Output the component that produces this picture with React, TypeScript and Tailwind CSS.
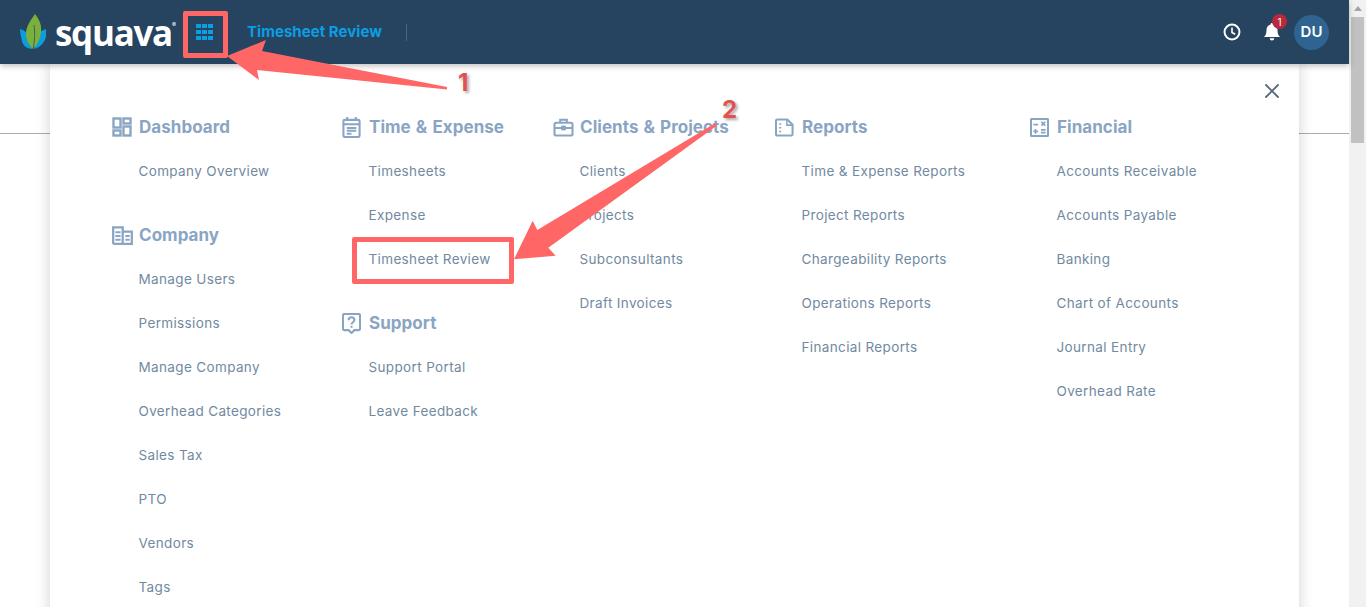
import { X } from 'lucide-react';

type IconProps = { className?: string };

const DashboardIcon = ({ className }: IconProps) => (
    <svg viewBox="0 0 20 20" className={className} fill="none" stroke="currentColor" strokeWidth="2.400">
        <rect x="1.500" y="1.500" width="7" height="9" />
        <rect x="11.500" y="1.500" width="7" height="5" />
        <rect x="1.500" y="13.500" width="7" height="5" />
        <rect x="11.500" y="9.500" width="7" height="9" />
    </svg>
);

const CompanyIcon = ({ className }: IconProps) => (
    <svg viewBox="0 0 22 20" className={className} fill="none" stroke="currentColor" strokeWidth="2.400">
        <path d="M1.200 19V1.500h10V19M11.200 6h9.600v12.800H1.200" />
        <path d="M3.500 6.500h5.500M3.500 10.500h5.500M3.500 14.500h5.500M14 10.500h4.500M14 14.500h4.500" strokeWidth="2" />
    </svg>
);

const TimeIcon = ({ className }: IconProps) => (
    <svg viewBox="0 0 20 22" className={className} fill="none" stroke="currentColor" strokeWidth="2.200">
        <rect x="1.500" y="3" width="17" height="18" rx="1.500" />
        <path d="M5.500 0v4M14.500 0v4M1.500 7.500h17M5 11.500h10M5 14.500h10M5 17.500h5" />
    </svg>
);

const BriefcaseIcon = ({ className }: IconProps) => (
    <svg viewBox="0 0 22 20" className={className} fill="none" stroke="currentColor" strokeWidth="2.200">
        <rect x="1.500" y="5" width="19" height="13.500" rx="2" />
        <path d="M7.500 5V1.800h7V5M1.500 10.500h19" />
        <rect x="8.500" y="8" width="5" height="5" fill="currentColor" stroke="none" />
    </svg>
);

const SupportIcon = ({ className }: IconProps) => (
    <svg viewBox="0 0 20 22" className={className} fill="none" stroke="currentColor" strokeWidth="2.200">
        <path d="M2.500 1h15a1.500 1.500 0 0 1 1.500 1.500v14a1.500 1.500 0 0 1-1.500 1.500H13l-3 3-3-3H2.500A1.500 1.500 0 0 1 1 16.500v-14A1.500 1.500 0 0 1 2.500 1z" />
        <path d="M7 7.500C7 5.500 8.300 4.500 10 4.500s3 1 3 2.800c0 2.400-3 2.400-3 4.700" />
        <path d="M10 13.500v2" />
    </svg>
);

const ReportsIcon = ({ className }: IconProps) => (
    <svg viewBox="0 0 20 20" className={className} fill="none" stroke="currentColor" strokeWidth="2.200">
        <path d="M2.500 1.500H13l5.500 5.500v10a1.500 1.500 0 0 1-1.500 1.500H2.500A1.500 1.500 0 0 1 1 17V3a1.500 1.500 0 0 1 1.500-1.500z" />
        <path d="M12.500 1.500V7.500h6" strokeWidth="1.600" />
        <path d="M5.500 5.500v1.500M5.500 9.500V11M5.500 13.500V15" />
    </svg>
);

const FinancialIcon = ({ className }: IconProps) => (
    <svg viewBox="0 0 20 20" className={className} fill="none" stroke="currentColor" strokeWidth="2.200">
        <rect x="1" y="1" width="18" height="18" rx="1" />
        <path d="M3.500 7h5M5.800 11.500v5M3.500 14h5M11.500 12.500h5M11.500 15.500h5" strokeWidth="1.800" />
        <path d="M12 4l4 4M16 4l-4 4" strokeWidth="1.800" />
    </svg>
);

const columns = [
    {
        width: 'w-[230px]',
        groups: [
            { icon: DashboardIcon, size: 'w-[20px] h-[20px]', title: 'Dashboard', items: ['Company Overview'] },
            {
                icon: CompanyIcon,
                size: 'w-[21px] h-[19px]',
                title: 'Company',
                items: ['Manage Users', 'Permissions', 'Manage Company', 'Overhead Categories', 'Sales Tax', 'PTO', 'Vendors', 'Tags'],
            },
        ],
    },
    {
        width: 'w-[211px]',
        groups: [
            { icon: TimeIcon, size: 'w-[19px] h-[21px]', title: 'Time & Expense', items: ['Timesheets', 'Expense', 'Timesheet Review'] },
            { icon: SupportIcon, size: 'w-[19px] h-[21px]', title: 'Support', items: ['Support Portal', 'Leave Feedback'] },
        ],
    },
    {
        width: 'w-[222px]',
        groups: [
            {
                icon: BriefcaseIcon,
                size: 'w-[21px] h-[19px]',
                title: 'Clients & Projects',
                items: ['Clients', 'Projects', 'Subconsultants', 'Draft Invoices'],
            },
        ],
    },
    {
        width: 'w-[255px]',
        groups: [
            {
                icon: ReportsIcon,
                size: 'w-[19px] h-[19px]',
                title: 'Reports',
                items: ['Time & Expense Reports', 'Project Reports', 'Chargeability Reports', 'Operations Reports', 'Financial Reports'],
            },
        ],
    },
    {
        width: 'w-[220px]',
        groups: [
            {
                icon: FinancialIcon,
                size: 'w-[19px] h-[19px]',
                title: 'Financial',
                items: ['Accounts Receivable', 'Accounts Payable', 'Banking', 'Chart of Accounts', 'Journal Entry', 'Overhead Rate'],
            },
        ],
    },
];

function Logo() {
    return (
        <div className="flex w-[151px] shrink-0 items-center">
            <svg viewBox="0 0 26 36" className="h-[36px] w-[26px] shrink-0">
                <path d="M0 15c4 1 7 3 8 8 1 4 2 8 5 12-6 0-10-3-11-8-1-4-2-8-2-12z" fill="#0d9ddb" />
                <path d="M26 15c1 5 0 10-3 14-2 3-5 5-9 6 2-3 1-7 2-11 1-5 5-7 10-9z" fill="#0d9ddb" />
                <path d="M15 0c4 5 7 11 6 18-1 7-3 12-8 17-4-4-7-9-7-15C6 12 11 6 15 0z" fill="#7ab13c" />
                <path d="M14 11c1 8 1 15-1 24" stroke="#26435f" strokeWidth="0.700" fill="none" />
            </svg>
            <span className="ml-[9px] font-['Open_Sans',sans-serif] text-[35px] leading-none font-bold tracking-[-1.300px] text-white">squava</span>
            <span className="mt-[-14px] text-[6px] leading-none text-white">®</span>
        </div>
    );
}

function Scrollbar() {
    return (
        <div className="flex w-[17px] shrink-0 flex-col items-center bg-[#f1f1f1]">
            <div className="flex h-[17px] w-full items-center justify-center">
                <div className="h-0 w-0 border-x-[4px] border-b-[5px] border-x-transparent border-b-[#a3a3a3]" />
            </div>
            <div className="h-[126px] w-[13px] bg-[#c1c1c1]" />
        </div>
    );
}

export default function App() {
    return (
        <div className="relative flex h-[607px] w-full overflow-hidden bg-white font-['Inter',sans-serif]">
            <div className="flex min-w-0 flex-1 flex-col">
                <header className="relative z-20 flex h-16 shrink-0 items-center bg-[#26435f] pl-[20px] pr-[20px] shadow-[0_2px_6px_rgba(0,0,0,0.25)]">
                    <Logo />
                    <div className="ml-[25px] grid h-[16px] w-[17px] grid-cols-3 grid-rows-3 gap-[1.500px]">
                        {Array.from({ length: 9 }).map((_, i) => (
                            <div key={i} className="bg-[#0b9ee3]" />
                        ))}
                    </div>
                    <span className="ml-[34px] w-[134px] pt-[1px] text-[15px] font-bold tracking-[0.05px] whitespace-nowrap text-[#0b9ee3]">Timesheet Review</span>
                    <div className="ml-[25px] h-[17px] w-px bg-[#3f6a8f]" />
                    <div className="ml-auto flex items-center">
                        <svg viewBox="0 0 20 20" className="h-[18px] w-[18px]" fill="none" stroke="white" strokeWidth="2.200">
                            <circle cx="10" cy="10" r="8.300" />
                            <path d="M10 5v5.500l3.500 2" strokeWidth="1.800" />
                        </svg>
                        <div className="relative ml-[23px] mr-[14px]">
                            <svg viewBox="0 0 16 18" className="h-[18px] w-[16px]" fill="white">
                                <path d="M8 0a1.400 1.400 0 0 1 1.400 1.500C12 2.200 13.500 4.300 13.500 7c0 4 1 5.500 2.500 7H0c1.500-1.500 2.500-3 2.500-7 0-2.700 1.500-4.800 4.100-5.500A1.400 1.400 0 0 1 8 0z" />
                                <path d="M5.800 15.200h4.400A2.200 2.200 0 0 1 8 17.500a2.200 2.200 0 0 1-2.200-2.300z" />
                            </svg>
                            <span className="absolute -right-[7px] -top-[9px] flex h-[15px] w-[15px] items-center justify-center rounded-full bg-[#b8293d] text-[10px] leading-none text-white">1</span>
                        </div>
                        <div className="flex h-[35px] w-[35px] items-center justify-center rounded-full bg-[#2f6390] text-[15px] font-semibold text-white">DU</div>
                    </div>
                </header>
                <div className="mt-[69px] border-t border-[#ababab]" />
            </div>
            <Scrollbar />

            {/* menu panel */}
            <div className="absolute left-[50px] top-[64px] z-10 h-[560px] w-[1249px] bg-white pl-[62px] pt-[41px] shadow-[0_0_14px_rgba(0,0,0,0.18)]">
                <X className="absolute right-[15px] top-[15px] h-[24px] w-[24px] text-[#5d6b78]" strokeWidth={1.900} />
                <div className="flex">
                    {columns.map((col) => (
                        <div key={col.groups[0].title} className={`${col.width} flex shrink-0 flex-col gap-5`}>
                            {col.groups.map((group) => (
                                <div key={group.title}>
                                    <div className="flex h-11 items-center text-[#8aa5c4]">
                                        <div className="flex w-[27px] shrink-0 items-center">
                                            <group.icon className={group.size} />
                                        </div>
                                        <span className="pt-[2px] text-[17px] font-bold tracking-[0.05px] [word-spacing:1px] whitespace-nowrap">{group.title}</span>
                                    </div>
                                    {group.items.map((item) => (
                                        <div key={item} className="ml-[26.500px] flex h-11 items-center text-[13.500px] tracking-[0.36px] whitespace-nowrap text-[#718aa1]">
                                            {item}
                                        </div>
                                    ))}
                                </div>
                            ))}
                        </div>
                    ))}
                </div>
            </div>

            {/* annotations on top of the screenshot */}
            <div className="absolute left-[183px] top-[11px] z-30 h-[47px] w-[45px] rounded-[2px] border-[5.500px] border-[#ff6666]" />
            <div className="absolute left-[352px] top-[237px] z-30 h-[47px] w-[162px] rounded-[2px] border-[5.500px] border-[#ff6666]" />
            <svg viewBox="0 0 1366 607" className="pointer-events-none absolute left-0 top-0 z-30 h-[607px] w-[1366px]" fill="#ff6666">
                <polygon points="227,56 266,40 262,51 447,87 447,89.500 257,70 259,80" />
                <polygon points="514,259.300 532.700,220.700 537.300,230 715,123.300 716.700,125.700 548.300,247.700 555.700,255.700" />
            </svg>
            <span className="absolute left-[458px] top-[71px] z-30 text-[24px] font-bold leading-none text-[#e2504f] [text-shadow:2px_2px_3px_rgba(0,0,0,0.35)]">1</span>
            <span className="absolute left-[722px] top-[98px] z-30 text-[24px] font-bold leading-none text-[#e2504f] [text-shadow:2px_2px_3px_rgba(0,0,0,0.35)]">2</span>
        </div>
    );
}
